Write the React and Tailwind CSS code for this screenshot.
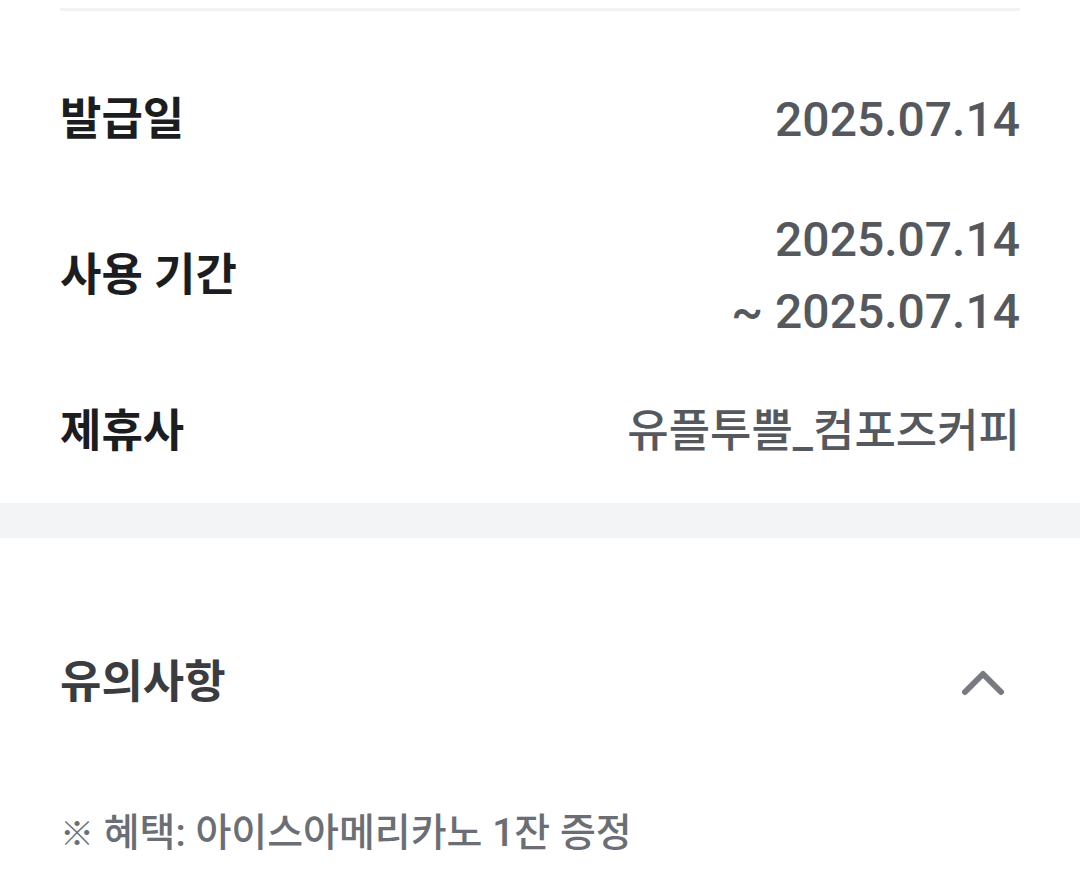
export default function App() {
  const font = { fontFamily: "Roboto, 'Noto Sans CJK KR', sans-serif" };
  return (
    <div className="w-[1080px] min-h-[893px] bg-white" style={font}>
      <div className="px-[60px] pt-[8px]">
        <div className="h-[3px] bg-[#f1f2f3]" />
      </div>

      <div className="px-[60px] pt-[73px] pb-[35px] flex flex-col gap-[48px]">
        <div className="flex justify-between items-center leading-[72px]">
          <span className="text-[45px] font-bold text-[#1c1d1f]">발급일</span>
          <span className="text-[48px] font-medium text-[#55595e]">2025.07.14</span>
        </div>
        <div className="flex justify-between items-center leading-[72px]">
          <span className="text-[45px] font-bold text-[#1c1d1f]">사용 기간</span>
          <div className="flex flex-col items-end text-[48px] font-medium text-[#55595e]">
            <span>2025.07.14</span>
            <span>~ 2025.07.14</span>
          </div>
        </div>
        <div className="flex justify-between items-center leading-[72px]">
          <span className="text-[45px] font-bold text-[#1c1d1f]">제휴사</span>
          <span className="text-[45px] font-medium text-[#55595e]">유플투쁠_컴포즈커피</span>
        </div>
      </div>

      <div className="h-[35px] bg-[#f3f4f5]" />

      <div className="px-[60px] pt-[109px] flex justify-between items-center leading-[72px]">
        <span className="text-[45px] font-bold text-[#3a3c3f]">유의사항</span>
        <svg width="42" height="26" viewBox="0 0 42 26" className="mr-[16px]">
          <path d="M3 22 L21 4 L39 22" fill="none" stroke="#777b80" strokeWidth="6" strokeLinecap="round" strokeLinejoin="round" />
        </svg>
      </div>

      <div className="px-[60px] pt-[84px] leading-[60px]">
        <span className="text-[39px] font-medium text-[#6b6f75]">
          <span className="font-bold text-[34px]">※</span> 혜택: 아이스아메리카노 1잔 증정
        </span>
      </div>
    </div>
  );
}
